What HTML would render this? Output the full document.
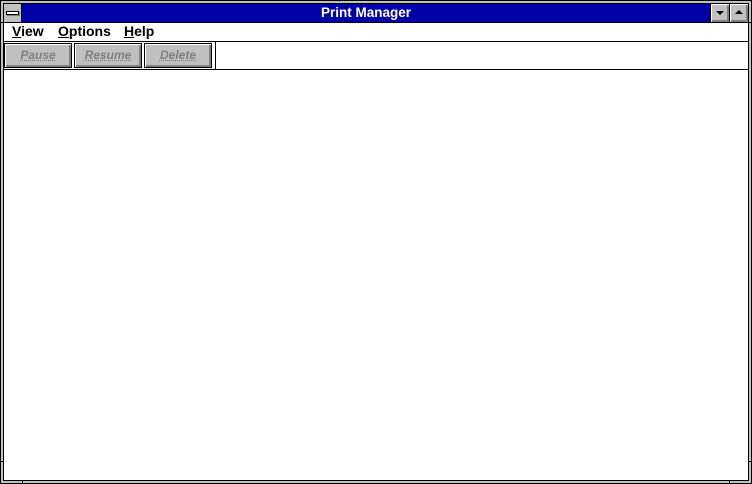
<html><head><style>
*{margin:0;padding:0;box-sizing:border-box}
body{width:752px;height:484px;background:#c0c0c0;position:relative;overflow:hidden;font-family:"Liberation Sans",sans-serif;font-weight:bold;font-size:14px}
.a{position:absolute}
.btn{position:absolute;top:43px;height:25px;width:68px;background:#c0c0c0;border:1px solid #000;box-shadow:inset 1px 1px 0 #fff,inset -2px -2px 0 #808080;color:#808080;text-align:center;line-height:22px;font-style:italic;font-size:12px;text-decoration:underline dotted}
u{text-decoration:underline}
</style></head><body>
<div class="a" style="left:0;top:0;width:752px;height:484px;border:1px solid #000"></div>
<div class="a" style="left:3px;top:3px;width:746px;height:478px;border:1px solid #000;background:#fff"></div>
<div class="a" style="left:22px;top:4px;width:688px;height:18px;background:#0000a8;color:#fff;text-align:center;line-height:18px;font-size:13.5px">Print Manager</div>
<div class="a" style="left:4px;top:4px;width:18px;height:18px;background:#c0c0c0;border-right:1px solid #000"><div class="a" style="left:2px;top:7px;width:13px;height:4px;border:1px solid #000;background:#fff;box-shadow:1px 1px 0 #808080"></div></div>
<div class="a" style="left:710px;top:4px;width:19px;height:18px;background:#c0c0c0;border-left:1px solid #000;box-shadow:inset 1px 1px 0 #fff,inset -2px -2px 0 #808080"><div class="a" style="left:5px;top:7px;border-left:4px solid transparent;border-right:4px solid transparent;border-top:4px solid #000"></div></div>
<div class="a" style="left:729px;top:4px;width:19px;height:18px;background:#c0c0c0;border-left:1px solid #000;box-shadow:inset 1px 1px 0 #fff,inset -2px -2px 0 #808080"><div class="a" style="left:5px;top:6px;border-left:4px solid transparent;border-right:4px solid transparent;border-bottom:4px solid #000"></div></div>
<div class="a" style="left:4px;top:22px;width:744px;height:1px;background:#000"></div>
<div class="a" style="left:12px;top:22px;line-height:18px"><u>V</u>iew</div>
<div class="a" style="left:58px;top:22px;line-height:18px"><u>O</u>ptions</div>
<div class="a" style="left:124px;top:22px;line-height:18px"><u>H</u>elp</div>
<div class="a" style="left:4px;top:41px;width:744px;height:1px;background:#000"></div>
<div class="btn" style="left:4px">Pause</div>
<div class="btn" style="left:74px">Resume</div>
<div class="btn" style="left:144px">Delete</div>
<div class="a" style="left:215px;top:42px;width:1px;height:27px;background:#000"></div>
<div class="a" style="left:4px;top:69px;width:744px;height:1px;background:#000"></div>
<div class="a" style="left:0;top:22px;width:3px;height:1px;background:#000"></div>
<div class="a" style="left:749px;top:22px;width:3px;height:1px;background:#000"></div>
<div class="a" style="left:0;top:461px;width:3px;height:1px;background:#000"></div>
<div class="a" style="left:749px;top:461px;width:3px;height:1px;background:#000"></div>
<div class="a" style="left:22px;top:481px;width:1px;height:3px;background:#000"></div>
<div class="a" style="left:729px;top:481px;width:1px;height:3px;background:#000"></div>
</body></html>
